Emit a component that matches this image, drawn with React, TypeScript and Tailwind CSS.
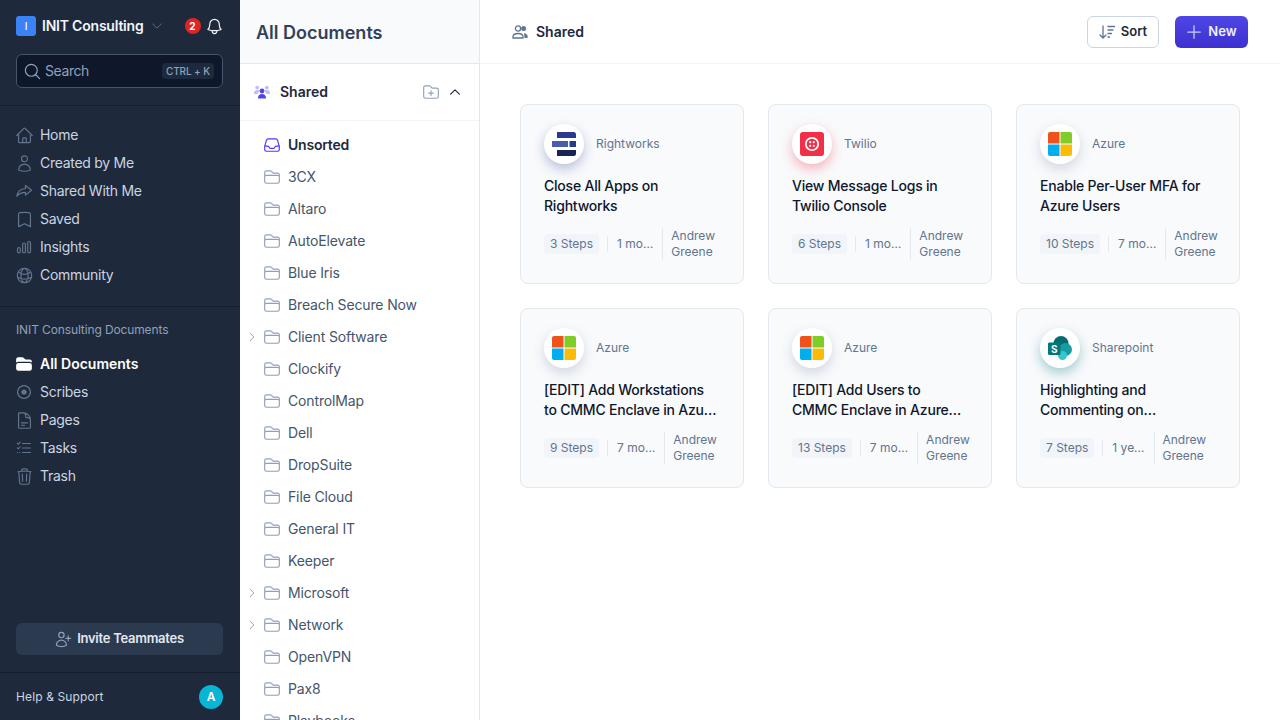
import type { ReactNode } from "react";
import {
  HiOutlineBell,
  HiOutlineBookmark,
  HiOutlineChevronDown,
  HiOutlineChevronRight,
  HiOutlineChevronUp,
  HiOutlineDocumentText,
  HiOutlineFolder,
  HiOutlineFolderPlus,
  HiOutlineGlobeAlt,
  HiOutlineHome,
  HiOutlineInbox,
  HiOutlineMagnifyingGlass,
  HiOutlinePlus,
  HiOutlineTrash,
  HiOutlineUser,
  HiOutlineUserPlus,
  HiFolder,
} from "react-icons/hi2";

function ForwardIcon() {
  return (
    <svg viewBox="0 0 24 24" fill="none" stroke="currentColor" strokeWidth="1.6" strokeLinejoin="round" className="size-[18px] shrink-0">
      <path d="M14 4.500l8 6.500-8 6.500v-3.700c-5 0-8.500 1.400-11.500 5.200.5-5.500 4-9.600 11.500-10.300z" />
    </svg>
  );
}

function BarsIcon() {
  return (
    <svg viewBox="0 0 16 16" fill="none" stroke="currentColor" strokeWidth="1.2" className="size-4 shrink-0">
      <rect x="1.500" y="8.500" width="2.800" height="5.500" rx="1.400" />
      <rect x="6.600" y="4" width="2.800" height="10" rx="1.400" />
      <rect x="11.700" y="2.500" width="2.800" height="11.500" rx="1.400" />
    </svg>
  );
}

function ScribesIcon() {
  return (
    <svg viewBox="0 0 16 16" fill="none" className="size-4 shrink-0">
      <circle cx="8" cy="8" r="6.400" stroke="currentColor" strokeWidth="1.300" />
      <circle cx="8" cy="8" r="2.600" fill="currentColor" />
    </svg>
  );
}

function TasksIcon() {
  return (
    <svg viewBox="0 0 16 16" fill="none" stroke="currentColor" strokeWidth="1.100" strokeLinecap="round" className="size-4 shrink-0">
      <path d="M6.500 3.500h8M6.500 8h8M6.500 12.500h8" />
      <path d="M1.300 3.200l1 1 1.800-2" />
      <path d="M1.300 7.800l1 1 1.800-2" />
      <path d="M1.600 12.500h.1M3.600 12.500h.1" />
    </svg>
  );
}

function SortIcon() {
  return (
    <svg viewBox="0 0 16 16" fill="none" stroke="currentColor" strokeWidth="1.300" strokeLinecap="round" strokeLinejoin="round" className="size-4 shrink-0 text-slate-500">
      <path d="M4 2v12M1 11l3 3 3-3" />
      <path d="M9 2.500h6.500M9 6h5M9 9.500h3.500M9 13h1.500" />
    </svg>
  );
}

function SharedDuoIcon() {
  return (
    <svg viewBox="0 0 16 16" className="size-4 shrink-0">
      <g fill="#c4bdfb">
        <circle cx="3.200" cy="3.600" r="1.900" />
        <circle cx="12.800" cy="3.600" r="1.900" />
        <path d="M0 9c0-1.800 1.400-3 3.200-3s2.400.6 2.600 1.200C4.600 7.800 4 8.600 4 10H0z" />
        <path d="M16 9c0-1.800-1.400-3-3.200-3s-2.400.6-2.600 1.200c1.200.6 1.800 1.400 1.800 2.800h4z" />
      </g>
      <g fill="#4f46e5">
        <circle cx="8" cy="7" r="2.400" />
        <path d="M4 14c0-2.600 1.700-4 4-4s4 1.400 4 4v.5H4z" />
      </g>
    </svg>
  );
}

function SharedMonoIcon() {
  return (
    <svg viewBox="0 0 16 16" className="size-4 shrink-0 text-slate-500" fill="none" stroke="currentColor" strokeWidth="1.300">
      <circle cx="6" cy="4.500" r="2.600" />
      <circle cx="11.600" cy="4.500" r="2.500" fill="currentColor" stroke="none" />
      <path d="M1 14v-1.200c0-2 1.800-3.300 5-3.300s5 1.300 5 3.300V14H1z" />
      <path d="M12 9.200c2 .2 3.600 1.300 3.600 3V14H12.500z" fill="currentColor" stroke="none" />
    </svg>
  );
}

function RightworksLogo() {
  return (
    <svg viewBox="0 0 24 24" className="size-6">
      <path d="M5 0h16.500A2.500 2.500 0 0 1 24 2.500V6H5z" fill="#2b3a8c" />
      <rect x="0" y="9" width="16" height="6" fill="#4c5cac" />
      <rect x="17.500" y="9" width="6.500" height="6" fill="#2b3a8c" />
      <path d="M5 18h19v3.500a2.500 2.500 0 0 1-2.500 2.500H5z" fill="#1a2255" />
    </svg>
  );
}

function TwilioLogo() {
  return (
    <svg viewBox="0 0 24 24" className="size-6">
      <rect width="24" height="24" rx="3" fill="#f22f46" />
      <circle cx="12" cy="12" r="6.200" fill="none" stroke="#fff" strokeWidth="1.800" />
      <circle cx="10.200" cy="10.200" r="1.100" fill="#fff" />
      <circle cx="13.800" cy="10.200" r="1.100" fill="#fff" />
      <circle cx="10.200" cy="13.800" r="1.100" fill="#fff" />
      <circle cx="13.800" cy="13.800" r="1.100" fill="#fff" />
    </svg>
  );
}

function AzureLogo() {
  return (
    <svg viewBox="0 0 24 24" className="size-6">
      <path d="M2 0h9.500v11.500H0V2a2 2 0 0 1 2-2z" fill="#f1511b" />
      <path d="M12.500 0H22a2 2 0 0 1 2 2v9.500H12.500z" fill="#80cc28" />
      <path d="M0 12.500h11.500V24H2a2 2 0 0 1-2-2z" fill="#00adef" />
      <path d="M12.500 12.500H24V22a2 2 0 0 1-2 2h-9.500z" fill="#fbbc09" />
    </svg>
  );
}

function SharepointLogo() {
  return (
    <svg viewBox="0 0 24 24" className="size-6">
      <circle cx="13" cy="7.500" r="7.500" fill="#036c70" />
      <circle cx="17.500" cy="13.500" r="6.500" fill="#1a9ba1" />
      <circle cx="14.500" cy="19.500" r="4.500" fill="#37c6d0" />
      <rect x="0" y="6.500" width="12.500" height="12.500" rx="1.200" fill="#03787c" />
      <text x="6.200" y="16.500" textAnchor="middle" fontSize="10" fontWeight="700" fill="#fff" fontFamily="Inter, sans-serif">S</text>
    </svg>
  );
}

const ICON = "size-[19px] shrink-0";

const NAV_TOP: { label: string; icon: ReactNode }[] = [
  { label: "Home", icon: <HiOutlineHome className={ICON} /> },
  { label: "Created by Me", icon: <HiOutlineUser className={ICON} /> },
  { label: "Shared With Me", icon: <ForwardIcon /> },
  { label: "Saved", icon: <HiOutlineBookmark className={ICON} /> },
  { label: "Insights", icon: <BarsIcon /> },
  { label: "Community", icon: <HiOutlineGlobeAlt className={ICON} /> },
];

const NAV_DOCS: { label: string; icon: ReactNode }[] = [
  { label: "Scribes", icon: <ScribesIcon /> },
  { label: "Pages", icon: <HiOutlineDocumentText className={ICON} /> },
  { label: "Tasks", icon: <TasksIcon /> },
  { label: "Trash", icon: <HiOutlineTrash className={ICON} /> },
];

const FOLDERS: { name: string; nested?: boolean }[] = [
  { name: "3CX" },
  { name: "Altaro" },
  { name: "AutoElevate" },
  { name: "Blue Iris" },
  { name: "Breach Secure Now" },
  { name: "Client Software", nested: true },
  { name: "Clockify" },
  { name: "ControlMap" },
  { name: "Dell" },
  { name: "DropSuite" },
  { name: "File Cloud" },
  { name: "General IT" },
  { name: "Keeper" },
  { name: "Microsoft", nested: true },
  { name: "Network", nested: true },
  { name: "OpenVPN" },
  { name: "Pax8" },
  { name: "Playbooks" },
];

type Doc = {
  app: string;
  logo: ReactNode;
  glow: string;
  title: string;
  steps: string;
  age: string;
};

const DOCS: Doc[] = [
  {
    app: "Rightworks",
    logo: <RightworksLogo />,
    glow: "shadow-[0_5px_12px_rgba(43,58,140,0.3)]",
    title: "Close All Apps on Rightworks",
    steps: "3 Steps",
    age: "1 mo…",
  },
  {
    app: "Twilio",
    logo: <TwilioLogo />,
    glow: "shadow-[0_5px_12px_rgba(242,47,70,0.35)]",
    title: "View Message Logs in Twilio Console",
    steps: "6 Steps",
    age: "1 mo…",
  },
  {
    app: "Azure",
    logo: <AzureLogo />,
    glow: "shadow-[0_5px_12px_rgba(100,116,139,0.25)]",
    title: "Enable Per-User MFA for Azure Users",
    steps: "10 Steps",
    age: "7 mo…",
  },
  {
    app: "Azure",
    logo: <AzureLogo />,
    glow: "shadow-[0_5px_12px_rgba(100,116,139,0.25)]",
    title: "[EDIT] Add Workstations to CMMC Enclave in Azu…",
    steps: "9 Steps",
    age: "7 mo…",
  },
  {
    app: "Azure",
    logo: <AzureLogo />,
    glow: "shadow-[0_5px_12px_rgba(100,116,139,0.25)]",
    title: "[EDIT] Add Users to CMMC Enclave in Azure…",
    steps: "13 Steps",
    age: "7 mo…",
  },
  {
    app: "Sharepoint",
    logo: <SharepointLogo />,
    glow: "shadow-[0_5px_12px_rgba(3,120,124,0.35)]",
    title: "Highlighting and Commenting on…",
    steps: "7 Steps",
    age: "1 ye…",
  },
];

function NavRow({ label, icon }: { label: string; icon: ReactNode }) {
  return (
    <div className="flex h-7 items-center gap-2">
      <span className="flex size-4 items-center justify-center text-slate-500">{icon}</span>
      <span className="text-sm tracking-[-0.02em] text-slate-300">{label}</span>
    </div>
  );
}

function Sidebar() {
  return (
    <aside className="flex h-full w-[240px] shrink-0 flex-col bg-[#1e293b]">
      <div className="border-b border-[#0f172a]/60 pt-4 pr-[17px] pb-[17px] pl-4">
        <div className="flex h-5 items-center">
          <span className="flex size-5 items-center justify-center rounded-[3px] bg-[#3b82f6] text-[10px] font-medium text-white">I</span>
          <span className="ml-1.5 text-sm font-semibold tracking-[-0.015em] text-slate-100">INIT Consulting</span>
          <HiOutlineChevronDown className="ml-[7px] size-3.5 text-slate-500" />
          <span className="ml-auto flex size-4 items-center justify-center rounded-full bg-[#dc2626] text-[10px] font-bold text-white">2</span>
          <span className="mr-[0.5px] ml-1.5 flex size-4 items-center justify-center text-slate-100">
            <HiOutlineBell className="size-[19px] shrink-0" />
          </span>
        </div>
        <div className="mt-[18px] flex h-[34px] items-center rounded-md border border-slate-600 bg-[#0f172a] pr-2 pl-[7px]">
          <span className="flex size-4 items-center justify-center text-slate-400">
            <HiOutlineMagnifyingGlass className="size-[19px] shrink-0" />
          </span>
          <span className="ml-[5px] text-sm tracking-[-0.03em] text-slate-400">Search</span>
          <span className="ml-auto rounded bg-slate-800 px-1 text-[10px] leading-4 font-medium tracking-[-0.01em] text-slate-400">CTRL + K</span>
        </div>
      </div>
      <nav className="flex flex-col border-b border-[#0f172a]/60 px-4 pt-[15px] pb-[17px]">
        {NAV_TOP.map((item) => (
          <NavRow key={item.label} label={item.label} icon={item.icon} />
        ))}
      </nav>
      <div className="px-4 pt-[15px]">
        <p className="text-xs leading-4 tracking-[-0.01em] text-slate-400">INIT Consulting Documents</p>
        <div className="mt-[12px] flex flex-col">
          <div className="flex h-7 items-center gap-2">
            <span className="flex size-4 items-center justify-center text-white">
              <HiFolder className="size-[18px] shrink-0" />
            </span>
            <span className="text-sm font-semibold text-white">All Documents</span>
          </div>
          {NAV_DOCS.map((item) => (
            <NavRow key={item.label} label={item.label} icon={item.icon} />
          ))}
        </div>
      </div>
      <div className="mt-auto border-b border-[#0f172a]/60 px-4 pb-[17px]">
        <div className="flex h-8 w-[207px] items-center justify-center gap-1.5 rounded-md bg-slate-700/70 text-[13px] font-semibold tracking-[-0.02em] text-slate-200">
          <span className="flex size-4 items-center justify-center text-slate-400">
            <HiOutlineUserPlus className="size-[19px] shrink-0" />
          </span>
          Invite Teammates
        </div>
      </div>
      <div className="flex h-[47px] items-center justify-between pr-[17px] pl-4">
        <span className="text-xs tracking-[0.01em] text-slate-300">Help &amp; Support</span>
        <span className="flex size-6 items-center justify-center rounded-full bg-[#06b6d4] text-xs font-semibold text-white">A</span>
      </div>
    </aside>
  );
}

function FolderPanel() {
  return (
    <section className="flex h-full w-[240px] shrink-0 flex-col overflow-hidden border-r border-slate-200 bg-white">
      <div className="flex h-16 shrink-0 items-center border-b border-slate-200 bg-slate-50 px-4 pt-0.5">
        <h1 className="text-lg font-semibold text-slate-700">All Documents</h1>
      </div>
      <div className="flex h-[57px] shrink-0 items-center border-b border-slate-100 pr-[17px] pl-[14px]">
        <SharedDuoIcon />
        <span className="ml-2.5 text-sm font-semibold text-slate-800">Shared</span>
        <span className="ml-auto flex size-4 items-center justify-center text-slate-400">
          <HiOutlineFolderPlus className="size-[18px] shrink-0" />
        </span>
        <HiOutlineChevronUp className="ml-[9px] size-3.5 stroke-2 text-slate-800" />
      </div>
      <ul className="flex flex-col pt-2">
        <li className="flex h-8 shrink-0 items-center pl-6">
          <span className="flex size-4 items-center justify-center text-indigo-600">
            <HiOutlineInbox className="size-[18px] shrink-0" />
          </span>
          <span className="ml-2 text-sm font-semibold tracking-[-0.015em] text-slate-800">Unsorted</span>
        </li>
        {FOLDERS.map((folder) => (
          <li key={folder.name} className="relative flex h-8 shrink-0 items-center pl-6">
            {folder.nested && <HiOutlineChevronRight className="absolute left-[6px] size-3 stroke-2 text-slate-400" />}
            <span className="flex size-4 items-center justify-center text-slate-400">
              <HiOutlineFolder className="size-[18px] shrink-0" />
            </span>
            <span className="ml-2 text-sm tracking-[-0.01em] text-slate-600">{folder.name}</span>
          </li>
        ))}
      </ul>
    </section>
  );
}

function DocCard({ doc }: { doc: Doc }) {
  return (
    <article className="h-[180px] w-[224px] rounded-lg border border-slate-200 bg-slate-50 px-[23px] pt-[19px]">
      <div className="flex items-center gap-3">
        <span className={`flex size-10 items-center justify-center rounded-full bg-white ${doc.glow}`}>{doc.logo}</span>
        <span className="text-xs text-slate-500">{doc.app}</span>
      </div>
      <h2 className="mt-3 h-10 text-sm leading-5 font-medium tracking-[-0.015em] text-slate-900">{doc.title}</h2>
      <div className="mt-3 flex items-center text-xs text-slate-500">
        <span className="shrink-0 rounded bg-slate-100 px-1.5 leading-5">{doc.steps}</span>
        <span className="ml-2 flex h-4 items-center border-l border-slate-200 pl-[9px] whitespace-nowrap">{doc.age}</span>
        <span className="ml-[9px] w-min border-l border-slate-200 pl-2 leading-4">Andrew Greene</span>
      </div>
    </article>
  );
}

export default function App() {
  return (
    <div className="flex h-screen w-full overflow-hidden bg-white [font-family:Inter,sans-serif]">
      <Sidebar />
      <FolderPanel />
      <main className="flex h-full min-w-0 flex-1 flex-col">
        <header className="flex h-16 shrink-0 items-center border-b border-slate-100 pr-8 pl-8">
          <SharedMonoIcon />
          <span className="ml-2 text-sm font-semibold text-slate-800">Shared</span>
          <button className="ml-auto flex h-8 w-[72px] items-center justify-center gap-1.5 rounded-md border border-slate-300 bg-white text-[13px] font-semibold text-slate-800">
            <SortIcon />
            Sort
          </button>
          <button className="ml-4 flex h-8 w-[73px] items-center justify-center gap-1.5 rounded-md bg-gradient-to-b from-[#4f46e5] to-[#3f2fd0] text-[13px] font-semibold text-indigo-50">
            <span className="flex size-4 items-center justify-center text-indigo-200">
              <HiOutlinePlus className="size-5 shrink-0" />
            </span>
            New
          </button>
        </header>
        <div className="grid grid-cols-[224px_224px_224px] gap-6 pt-10 pl-10">
          {DOCS.map((doc) => (
            <DocCard key={doc.title} doc={doc} />
          ))}
        </div>
      </main>
    </div>
  );
}
